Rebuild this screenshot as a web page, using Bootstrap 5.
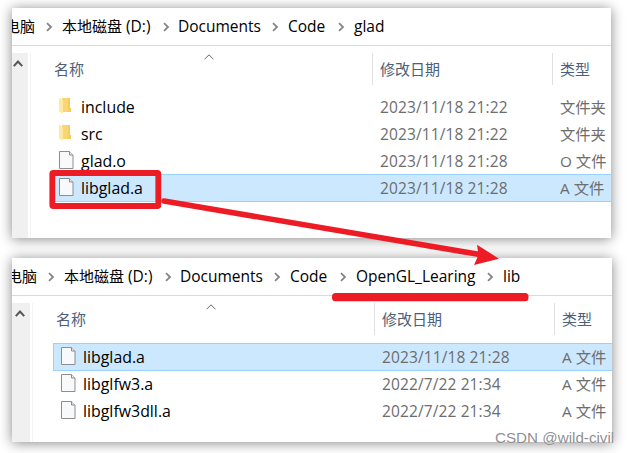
<!DOCTYPE html>
<html lang="zh-CN">
<head>
  <meta charset="UTF-8">
  <title>libglad.a</title>
  <link href="https://cdn.jsdelivr.net/npm/bootstrap@5.3.0/dist/css/bootstrap.min.css" rel="stylesheet">
  <style>
    body {
      width: 629px;
      height: 453px;
      overflow: hidden;
      background: #fff;
      font-family: "Open Sans", "Noto Sans CJK SC", sans-serif;
      font-size: 15.5px;
      line-height: 27px;
      color: #000;
    }
    .board {
      padding: 8px 0 0 12px;
      gap: 20px;
    }
    .explorer {
      --shift: 0px;
      width: 599px;
      height: 230px;
      background: #fff;
      box-shadow: 0 1px 12px rgba(0, 0, 0, .48);
    }
    .explorer.second {
      --shift: 2px;
      width: 600px;
      height: 184px;
    }
    .cjk { font-size: 15px; }
    .path-bar {
      height: 38px;
      padding-left: var(--shift);
      border-bottom: 1px solid #d9d9d9;
      overflow: hidden;
    }
    .path-bar > span { flex: none; white-space: nowrap; }
    .path-bar svg { flex: none; }
    .p-pc { width: 33px; margin-left: -7px; }
    .p-disk { width: 101px; margin-left: 9px; }
    .p-docs { width: 94px; margin-left: 8px; }
    .p-code { width: 50px; margin-left: 9px; }
    .p-glad { margin-left: 9px; }
    .p-open { width: 131px; margin-left: 9px; }
    .side {
      width: calc(16px + var(--shift));
      margin-top: 7px;
      background: #f0f0f0;
      padding: 6px 0 0 calc(1px + var(--shift));
      line-height: 0;
    }
    .side-line {
      width: 1px;
      margin: 7px 0 0 2px;
      background: #f3f3f3;
    }
    .files { padding-left: 20px; }
    .cols {
      display: grid;
      grid-template-columns: 321px 180px 1fr;
      white-space: nowrap;
    }
    .heads { height: 47px; padding-top: 7px; color: #4c607a; }
    .heads > div { height: 32px; line-height: 32px; }
    .heads > div + div { border-left: 1px solid #e0e0e0; padding-left: 7px; }
    .heads .c-name { padding-left: 3px; }
    .sort-mark { margin: 1px 0 0 120px; }
    .entry {
      height: 27px;
      color: #6d6d6d;
      border: 1px solid transparent;
      border-right: 0;
    }
    .entry > * { height: 25px; line-height: 27px; }
    .entry.picked {
      height: 28px;
      background: #cce8ff;
      border-color: #99d1ff;
      margin-bottom: -1px;
    }
    .c-file { color: #000; padding-left: 7px; font-size: 15.9px; }
    .c-file svg { margin-top: -1px; }
    .c-file span { margin: 2px 0 0 7px; }
    .entry .c-date { padding-left: 7px; letter-spacing: .12px; }
    .entry .c-type { padding-left: 7px; font-size: 15.3px; }
    .marks { left: 0; top: 0; pointer-events: none; }
    .watermark {
      left: 495px;
      top: 428px;
      font: 15.2px/20px "Liberation Sans", sans-serif;
      color: rgba(110, 110, 110, .78);
      text-shadow: 0 0 1px #fff;
      white-space: nowrap;
    }
  </style>
</head>
<body class="position-relative">
  <svg class="d-none">
    <symbol id="next" viewBox="0 0 7 10">
      <path d="M1 1.2 5 5 1 8.8" fill="none" stroke="#858585" stroke-width="1.8"/>
    </symbol>
    <symbol id="scroll-up" viewBox="0 0 10 9">
      <path d="M.8 7.2 5 2.6 9.2 7.2" fill="none" stroke="#555" stroke-width="2"/>
    </symbol>
    <symbol id="sort-up" viewBox="0 0 10 6">
      <path d="M.5 5.3 5 .8 9.5 5.3" fill="none" stroke="#666" stroke-width="1"/>
    </symbol>
    <symbol id="folder" viewBox="0 0 15 18">
      <path d="M3 1h8v10h1v4H3z" fill="#f7d774"/>
      <path d="M9 1h2v10h1v4H9z" fill="#f3cc62"/>
      <path d="M0 1h1l3 2.5v13.3L0 14.5z" fill="#ffe9a2"/>
    </symbol>
    <symbol id="doc" viewBox="0 0 15 18">
      <path d="M.5.5h10l3.5 3.5v13.5H.5z" fill="#f8f9fa" stroke="#8d8d8d"/>
      <path d="M10.5.5v3.5H14" fill="#e9e9e9" stroke="#8d8d8d"/>
    </symbol>
  </svg>

  <div class="board d-flex flex-column">
    <div class="explorer d-flex flex-column">
      <div class="path-bar d-flex align-items-center">
        <span class="p-pc cjk">电脑</span>
        <svg width="7" height="10" class="ms-2"><use href="#next"/></svg>
        <span class="p-disk"><span class="cjk">本地磁盘</span> (D:)</span>
        <svg width="7" height="10"><use href="#next"/></svg>
        <span class="p-docs">Documents</span>
        <svg width="7" height="10"><use href="#next"/></svg>
        <span class="p-code">Code</span>
        <svg width="7" height="10"><use href="#next"/></svg>
        <span class="p-glad">glad</span>
      </div>
      <div class="d-flex flex-grow-1">
        <div class="side"><svg width="10" height="9"><use href="#scroll-up"/></svg></div>
        <div class="side-line"></div>
        <div class="files flex-grow-1" id="glad"></div>
      </div>
    </div>

    <div class="explorer second d-flex flex-column">
      <div class="path-bar d-flex align-items-center">
        <span class="p-pc cjk">电脑</span>
        <svg width="7" height="10" class="ms-2"><use href="#next"/></svg>
        <span class="p-disk"><span class="cjk">本地磁盘</span> (D:)</span>
        <svg width="7" height="10"><use href="#next"/></svg>
        <span class="p-docs">Documents</span>
        <svg width="7" height="10"><use href="#next"/></svg>
        <span class="p-code">Code</span>
        <svg width="7" height="10"><use href="#next"/></svg>
        <span class="p-open">OpenGL_Learing</span>
        <svg width="7" height="10"><use href="#next"/></svg>
        <span class="p-glad">lib</span>
      </div>
      <div class="d-flex flex-grow-1">
        <div class="side"><svg width="10" height="9"><use href="#scroll-up"/></svg></div>
        <div class="side-line"></div>
        <div class="files flex-grow-1" id="lib"></div>
      </div>
    </div>
  </div>

  <!-- red annotations over both windows -->
  <svg class="marks position-absolute" width="629" height="453">
    <rect x="52.3" y="173" width="106" height="33" rx="1" fill="none" stroke="#ed1c24" stroke-width="5.8"/>
    <path d="M164 201 480 254.6" stroke="#ed1c24" stroke-width="5.6" stroke-linecap="round"/>
    <path d="M477 244.7 499 258.7 474 265 478.5 255z" fill="#ed1c24"/>
    <rect x="332" y="293" width="196.5" height="8.2" rx="3.5" fill="#ed1c24"/>
  </svg>
  <div class="watermark position-absolute">CSDN @wild-civil</div>

  <script>
    const folders = {
      glad: [
        ["folder", "include", "2023/11/18 21:22", "文件夹"],
        ["folder", "src", "2023/11/18 21:22", "文件夹"],
        ["doc", "glad.o", "2023/11/18 21:28", "O 文件"],
        ["doc", "libglad.a", "2023/11/18 21:28", "A 文件", true]
      ],
      lib: [
        ["doc", "libglad.a", "2023/11/18 21:28", "A 文件", true],
        ["doc", "libglfw3.a", "2022/7/22 21:34", "A 文件"],
        ["doc", "libglfw3dll.a", "2022/7/22 21:34", "A 文件"]
      ]
    };

    Object.entries(folders).forEach(([id, files]) => {
      const rows = files.map(([icon, name, date, type, picked]) => `
        <div class="entry cols ${picked ? "picked" : ""}">
          <div class="c-file d-flex align-items-center">
            <svg width="15" height="18"><use href="#${icon}"/></svg><span>${name}</span>
          </div>
          <div class="c-date">${date}</div>
          <div class="c-type">${type}</div>
        </div>`).join("");

      document.getElementById(id).innerHTML = `
        <div class="heads cols cjk">
          <div class="c-name d-flex">名称<svg class="sort-mark" width="10" height="6"><use href="#sort-up"/></svg></div>
          <div>修改日期</div>
          <div>类型</div>
        </div>${rows}`;
    });
  </script>

  <script src="https://cdn.jsdelivr.net/npm/bootstrap@5.3.0/dist/js/bootstrap.bundle.min.js"></script>
</body>
</html>
